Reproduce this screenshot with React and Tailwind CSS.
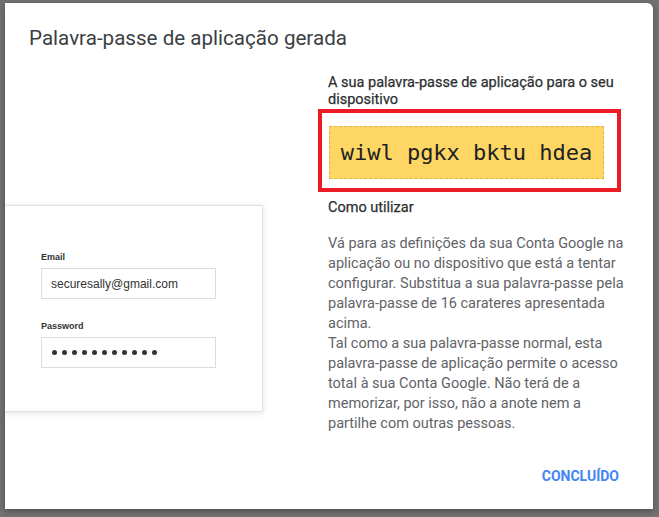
export default function App() {
  const dots = Array.from({ length: 11 });
  return (
    <div className="w-[659px] h-[517px] bg-[#727272] pt-[3px] pl-[5px] overflow-hidden">
      <div
        className="w-[648px] h-[506px] bg-white rounded-tr-[6px] overflow-hidden flex flex-col shadow-[0_2px_6px_rgba(0,0,0,0.35)]"
        style={{ fontFamily: "Roboto, 'Liberation Sans', sans-serif" }}
      >
        <div className="pt-[21px] pl-[24px] text-[20.6px] leading-[28px] text-[#3c4043]">
          Palavra-passe de aplicação gerada
        </div>
        <div className="flex mt-[21px]">
          <div className="w-[323px] shrink-0">
            <div
              className="mt-[132px] ml-[-12px] w-[270px] h-[207px] bg-white border border-[#e0e0e0] shadow-[0_1px_6px_rgba(0,0,0,0.12)] pl-[47px] pt-[45px]"
              style={{ fontFamily: "'Liberation Sans', Arial, sans-serif" }}
            >
              <div className="text-[9px] leading-[12px] font-bold text-[#333]">Email</div>
              <div className="mt-[5px] w-[175px] h-[31px] border border-[#dcdcdc] flex items-center pl-[9px] text-[12px] text-[#333]">
                securesally@gmail.com
              </div>
              <div className="mt-[21px] text-[9px] leading-[12px] font-bold text-[#333]">Password</div>
              <div className="mt-[5px] w-[175px] h-[31px] border border-[#dcdcdc] flex items-center pl-[10px] gap-[5px]">
                {dots.map((_, i) => (
                  <span key={i} className="w-[5px] h-[5px] rounded-full bg-[#333]" />
                ))}
              </div>
            </div>
          </div>
          <div className="w-[300px] flex flex-col">
            <div className="mt-[1px] text-[14.5px] leading-[17px] text-[#2d2f31] [-webkit-text-stroke:0.25px_#2d2f31] whitespace-nowrap">
              A sua palavra-passe de aplicação para o seu
              <br />
              dispositivo
            </div>
            <div className="mt-[1px] ml-[-10px] w-[303px] border-4 border-[#ec1c24] pt-[13px] pl-[7px] pr-[13px] pb-[9px]">
              <div
                className="w-[275px] h-[53px] bg-[#fdd663] border border-dashed border-[#e3b64a] flex items-center justify-center text-[22px] text-[#202124]"
                style={{ fontFamily: "'DejaVu Sans Mono', 'Liberation Mono', monospace" }}
              >
                wiwl pgkx bktu hdea
              </div>
            </div>
            <div className="mt-[6px] text-[14.5px] leading-[20px] text-[#2d2f31] [-webkit-text-stroke:0.25px_#2d2f31]">Como utilizar</div>
            <div className="mt-[16px] text-[14.5px] leading-[20px] text-[#5f6368] whitespace-nowrap">
              Vá para as definições da sua Conta Google na
              <br />
              aplicação ou no dispositivo que está a tentar
              <br />
              configurar. Substitua a sua palavra-passe pela
              <br />
              palavra-passe de 16 carateres apresentada
              <br />
              acima.
              <br />
              Tal como a sua palavra-passe normal, esta
              <br />
              palavra-passe de aplicação permite o acesso
              <br />
              total à sua Conta Google. Não terá de a
              <br />
              memorizar, por isso, não a anote nem a
              <br />
              partilhe com outras pessoas.
            </div>
            <div className="mt-[32px] self-end mr-[9px] text-[14px] leading-[20px] font-bold text-[#4285f4]">
              CONCLUÍDO
            </div>
          </div>
        </div>
      </div>
    </div>
  );
}
